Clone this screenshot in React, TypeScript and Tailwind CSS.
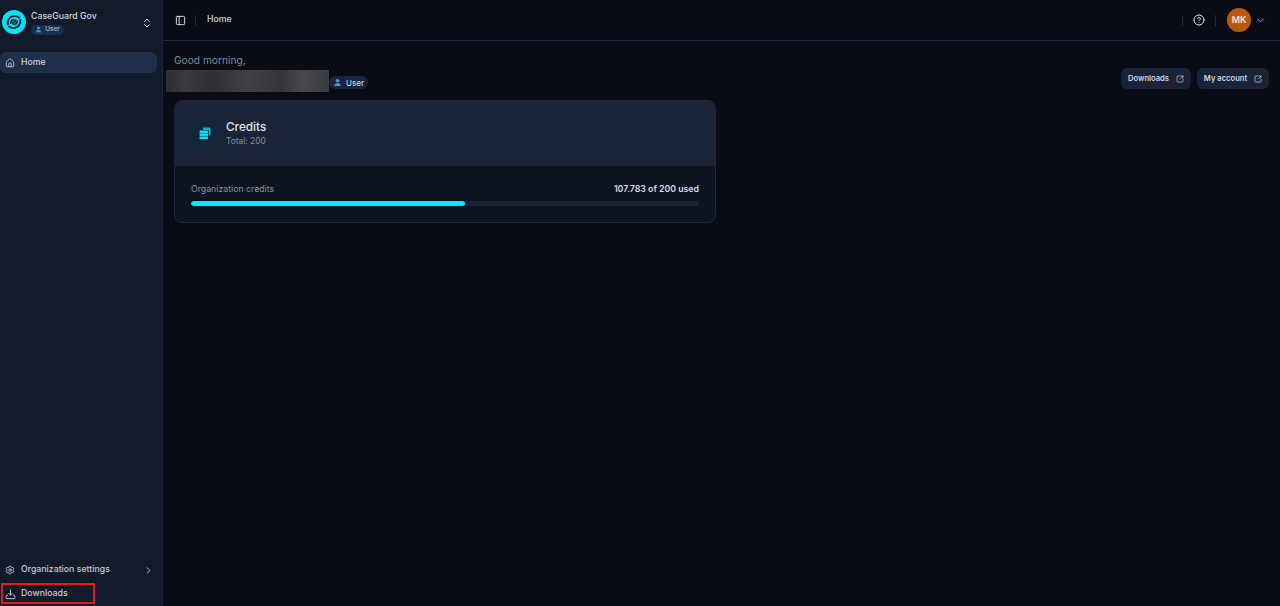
import { House, Settings, ChevronRight, ChevronDown, ChevronsUpDown, CircleHelp, SquareArrowOutUpRight, User, PanelLeft } from "lucide-react";

function RoleBadge({ small }: { small?: boolean }) {
  return small ? (
    <span className="flex h-[10px] w-[33px] items-center justify-center gap-[3px] rounded-full bg-[#17304f] text-[6.5px] font-medium text-[#a9bdd0]">
      <User className="h-[7px] w-[7px] fill-[#3f9fd0] text-[#3f9fd0]" />
      User
    </span>
  ) : (
    <span className="flex h-[13px] w-[39px] items-center justify-center gap-[4px] rounded-full bg-[#17263f] text-[8px] font-medium text-[#c7d2de]">
      <User className="h-[9px] w-[9px] fill-[#3f9fd0] text-[#3f9fd0]" />
      User
    </span>
  );
}

function Logo() {
  return (
    <svg viewBox="0 0 24 24" className="h-6 w-6 shrink-0">
      <circle cx="12" cy="12" r="12" fill="#00e5f5" />
      <g fill="none" stroke="#142033" strokeLinecap="round">
        <path d="M5.8 14.2C5 9.6 8.2 6 12.4 6c1.8 0 3.3.5 4.5 1.5" strokeWidth="2" />
        <path d="M18.2 9.8c.8 4.6-2.4 8.2-6.6 8.2-1.8 0-3.3-.5-4.5-1.5" strokeWidth="2" />
        <path d="M8.8 13.2C8.6 11 10 9.6 12 9.8c2 .2 2 2.2 0 2.2s-2 2 0 2.2c2 .2 3.4-1.2 3.2-3.4" strokeWidth="1.6" />
      </g>
    </svg>
  );
}

function DownloadTray({ className }: { className?: string }) {
  return (
    <svg viewBox="0 0 12 12" className={className} fill="none" stroke="currentColor" strokeWidth="1" strokeLinecap="round" strokeLinejoin="round">
      <path d="M6 1v5.5M4.2 4.8 6 6.6l1.8-1.8" />
      <path d="M3 6.5H2.4L1 9.2c-.3.6.2 1.3.9 1.3h8.2c.7 0 1.2-.7.9-1.3L9.6 6.5H9" />
    </svg>
  );
}

function CreditsIcon() {
  return (
    <span className="flex h-[27px] w-[27px] items-center justify-center rounded-lg bg-[#10273c] bg-[radial-gradient(circle,#175068_0.5px,transparent_0.7px)] bg-[length:2px_2px]">
      <svg viewBox="0 0 14 14" className="h-[14px] w-[14px]" fill="#00e5f5">
        <rect x="1.5" y="4.5" width="8.5" height="2.4" rx="0.6" />
        <rect x="1.5" y="7.5" width="8.5" height="2.4" rx="0.6" />
        <rect x="1.5" y="10.5" width="8.5" height="2.4" rx="0.6" />
        <path d="M5 1.5h6.5a1 1 0 0 1 1 1v7h-1.8V4H5z" opacity="0.75" />
      </svg>
    </span>
  );
}

function LinkButton({ label, width }: { label: string; width: string }) {
  return (
    <button className={`flex h-[21px] items-center justify-center gap-[7px] rounded-md bg-[#1a2336] text-[7.6px] font-semibold text-[#cfd7e0] ${width}`}>
      {label}
      <SquareArrowOutUpRight className="h-[8px] w-[8px]" />
    </button>
  );
}

export default function App() {
  return (
    <div
      className="flex h-[606px] w-[1280px] overflow-hidden bg-[#090c15] text-white"
      style={{ fontFamily: "Inter, 'Liberation Sans', sans-serif" }}
    >
      <aside className="flex w-[163px] shrink-0 flex-col border-r border-[#1e2638] bg-[#131a29]">
        <div className="flex h-[44px] items-center pl-[2px] pr-[9px]">
          <Logo />
          <div className="ml-[5px] flex flex-col gap-[3px] pt-[1px]">
            <span className="text-[8.75px] leading-[11px] font-medium text-[#cdd5de]">CaseGuard Gov</span>
            <RoleBadge small />
          </div>
          <ChevronsUpDown className="mt-[1px] ml-auto h-[12px] w-[12px] text-[#c5ccd6]" />
        </div>
        <nav className="mt-[8px] pr-[5px]">
          <div className="flex h-[21px] items-center gap-[6px] rounded-md bg-[#1f2f49] pl-[5px] text-[8.75px] font-medium text-[#c9d2dc]">
            <House className="h-[10px] w-[10px]" />
            Home
          </div>
        </nav>
        <div className="mt-auto flex flex-col">
          <div className="flex h-[24px] items-center gap-[6px] pr-[8px] pb-[2px] pl-[5px] text-[8.75px] font-medium text-[#c3ccd6]">
            <Settings className="h-[10px] w-[10px]" />
            Organization settings
            <ChevronRight className="ml-auto h-[11px] w-[11px]" />
          </div>
          <div className="mb-[2px] ml-[1px] flex h-[21px] w-[94px] items-center gap-[5px] border-2 border-[#dd1c1c] pt-[1px] pl-[2px] text-[8.75px] font-medium text-[#c3ccd6]">
            <DownloadTray className="h-[11px] w-[11px]" />
            Downloads
          </div>
        </div>
      </aside>

      <div className="flex min-w-0 flex-1 flex-col">
        <header className="flex h-[41px] shrink-0 items-center border-b border-[#1e2638] pr-[14px] pl-[12px]">
          <PanelLeft className="h-[11px] w-[11px] text-[#e5e9ee]" />
          <span className="ml-[9px] h-[11px] w-px bg-[#1e2638]" />
          <span className="ml-[11px] text-[8.75px] font-medium text-[#cdd5de]">Home</span>
          <span className="ml-auto h-[11px] w-px bg-[#1e2638]" />
          <CircleHelp className="ml-[10px] h-[12px] w-[12px] text-[#e5e9ee]" />
          <span className="ml-[10px] h-[11px] w-px bg-[#1e2638]" />
          <span className="ml-[11px] flex h-[24px] w-[24px] items-center justify-center rounded-full bg-[#b8590f] text-[9px] font-semibold text-[#f2e3d6]">
            MK
          </span>
          <ChevronDown className="ml-[4px] h-[11px] w-[11px] text-[#aab3bf]" />
        </header>

        <main className="flex-1 pt-[13px] pr-[11px] pl-[11px]">
          <div className="flex items-end justify-between">
            <div>
              <div className="text-[10.2px] leading-[13px] text-[#788aa0]">Good morning,</div>
              <div className="mt-[3px] -ml-[8px] flex items-end">
                <div className="h-[22px] w-[163px] bg-[linear-gradient(90deg,#2c2e34,#3b3c41_12%,#2f3036_28%,#404146_50%,#35363b_70%,#47484d_85%,#3a3b40)]" />
                <span className="mb-[3px]">
                  <RoleBadge />
                </span>
              </div>
            </div>
            <div className="flex gap-[6px] pb-[3px]">
              <LinkButton label="Downloads" width="w-[70px]" />
              <LinkButton label="My account" width="w-[72px]" />
            </div>
          </div>

          <section className="mt-[8px] w-[542px] overflow-hidden rounded-lg border border-[#1e2638] bg-[#0d1420]">
            <div className="flex h-[65px] items-center gap-[8px] border-b border-[#1e2638] bg-[#1b2336] pl-[16px]">
              <CreditsIcon />
              <div>
                <div className="text-[11.75px] leading-[15px] font-medium text-[#dfe5ec]">Credits</div>
                <div className="text-[8.4px] leading-[12px] text-[#7f8da0]">Total: 200</div>
              </div>
            </div>
            <div className="px-[16px] pt-[17px] pb-[16px]">
              <div className="flex items-center justify-between text-[8.75px] leading-[12px]">
                <span className="text-[#7f93a8]">Organization credits</span>
                <span className="font-semibold text-[#d5dce4]">107.783 of 200 used</span>
              </div>
              <div className="mt-[6px] h-[5px] overflow-hidden rounded-full bg-[#1b2336]">
                <div className="h-full rounded-full bg-[#00e9ff]" style={{ width: "53.9%" }} />
              </div>
            </div>
          </section>
        </main>
      </div>
    </div>
  );
}
